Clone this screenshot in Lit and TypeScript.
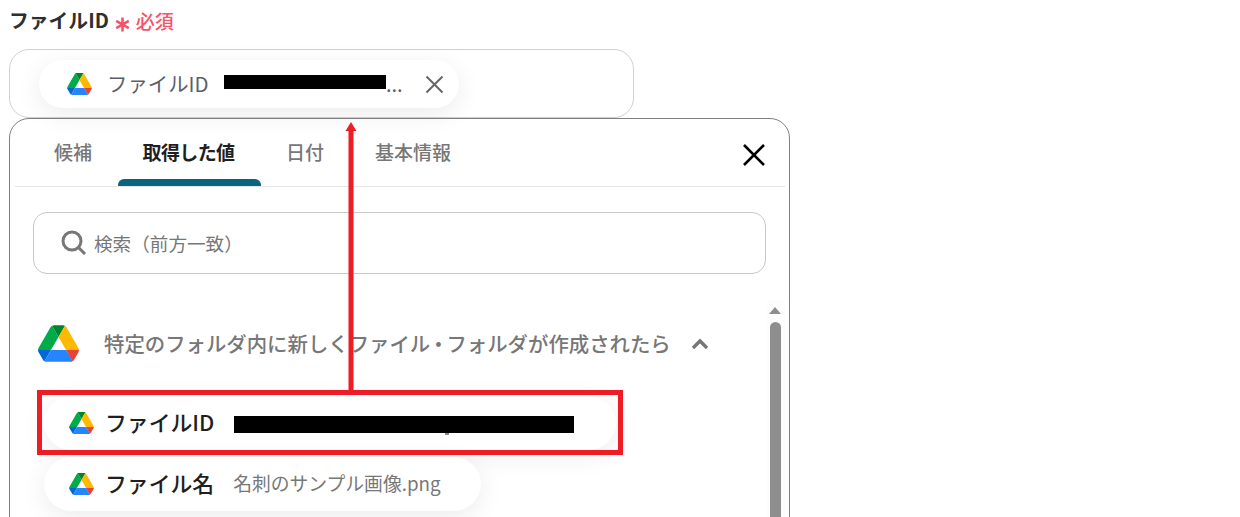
import { LitElement, html, css, svg } from "lit";
import { customElement } from "lit/decorators.js";

const drive = (size: number) => html`<svg class="drive" width=${size} height=${Math.round((size * 78) / 87.3)} viewBox="0 0 87.3 78">
  ${svg`<path d="m6.6 66.85 3.85 6.65c.8 1.4 1.95 2.5 3.3 3.3l13.75-23.8h-27.5c0 1.55.4 3.1 1.2 4.5z" fill="#0066da"/>
  <path d="m43.65 25-13.75-23.8c-1.35.8-2.5 1.9-3.3 3.3l-25.4 44a9.06 9.06 0 0 0 -1.2 4.5h27.5z" fill="#00ac47"/>
  <path d="m73.55 76.8c1.35-.8 2.5-1.9 3.3-3.3l1.6-2.75 7.65-13.25c.8-1.4 1.2-2.95 1.2-4.5h-27.502l5.852 11.5z" fill="#ea4335"/>
  <path d="m43.65 25 13.75-23.8c-1.35-.8-2.9-1.2-4.5-1.2h-18.5c-1.6 0-3.15.45-4.5 1.2z" fill="#00832d"/>
  <path d="m59.8 53h-32.3l-13.75 23.8c1.35.8 2.9 1.2 4.5 1.2h50.8c1.6 0 3.15-.45 4.5-1.2z" fill="#2684fc"/>
  <path d="m73.4 26.5-12.7-22c-.8-1.4-1.95-2.5-3.3-3.3l-13.75 23.8 16.15 28h27.45c0-1.55-.4-3.1-1.2-4.5z" fill="#ffba00"/>`}
</svg>`;

@customElement("app-root")
export class AppRoot extends LitElement {
  static styles = css`
    :host {
      display: block;
      position: relative;
      width: 1240px;
      height: 517px;
      overflow: hidden;
      background: #fff;
      font-family: "Noto Sans CJK JP", "Noto Sans", sans-serif;
      color: #222;
    }
    .label {
      display: flex;
      align-items: center;
      height: 39px;
      padding: 0 0 0 9px;
      font-size: 19.8px;
      font-weight: 700;
      color: #2e2e2e;
      line-height: 39px;
    }
    .star { margin-left: 6px; width: 15px; height: 15px; margin-top: 9px; }
    .req { margin-left: 6px; font-size: 19px; font-weight: 500; color: #f9526b; margin-top: 2px; }
    .field {
      box-sizing: border-box;
      margin: 10px 0 0 9px;
      width: 625px;
      height: 69px;
      border: 1px solid #cfd0d6;
      border-radius: 20px;
      padding: 10px 0 0 29px;
    }
    .chip {
      display: flex;
      align-items: center;
      box-sizing: border-box;
      background: #fff;
      border-radius: 27px;
      box-shadow: 0 6px 26px rgba(0, 0, 0, 0.08);
    }
    .chip.top {
      width: 420px;
      height: 48px;
      padding-left: 28px;
    }
    .chip.top .name { margin-left: 15px; padding-bottom: 3px; font-size: 20.4px; color: #5b5f69; width: 117px; white-space: nowrap; }
    .bar.top { width: 162px; height: 14px; background: #000; margin-bottom: 4px; }
    .dots { font-size: 20px; color: #5b5f69; line-height: 14px; width: 17px; white-space: nowrap; }
    .chip.top .x { margin-left: 22px; }
    .panel {
      box-sizing: border-box;
      margin-left: 9px;
      width: 781px;
      height: 460px;
      border: 1px solid #808080;
      border-radius: 20px;
      padding: 0 4px 0 5px;
    }
    .tabs {
      display: flex;
      align-items: stretch;
      height: 67px;
      padding-left: 15px;
      border-bottom: 1px solid #e6e6e6;
    }
    .tab {
      position: relative;
      box-sizing: border-box;
      padding-top: 18px;
      font-size: 19px;
      line-height: 30px;
      font-weight: 500;
      color: #777;
      white-space: nowrap;
    }
    .tab.first { padding-left: 24px; padding-right: 26px; }
    .tab.active { padding-left: 24.5px; padding-right: 26.5px; color: #1f1f1f; font-weight: 700; letter-spacing: -0.6px; }
    .tab.date { padding-left: 25px; padding-right: 25px; }
    .tab.last { margin-left: 2px; padding-left: 24px; padding-right: 24px; }
    .tab.active::after {
      content: "";
      position: absolute;
      left: 0;
      right: 0;
      bottom: 0;
      height: 7px;
      background: #07657f;
      border-radius: 6px 6px 0 0;
    }
    .close { margin-left: auto; margin-right: 19px; margin-top: 24px; width: 24px; height: 24px; }
    .search {
      display: flex;
      align-items: center;
      box-sizing: border-box;
      margin: 25px 0 0 18px;
      width: 733px;
      height: 62px;
      border: 1px solid #c8c8c8;
      border-radius: 14px;
      padding-left: 27px;
      font-size: 18.6px;
      color: #777;
    }
    .search span { margin-left: 7px; padding-bottom: 2px; }
    .body { display: flex; height: 300px; margin-top: 26px; }
    .list { flex: 1; min-width: 0; }
    .group {
      display: flex;
      align-items: center;
      height: 38px;
      margin: 24px 0 0 23px;
      font-size: 20.4px;
      font-weight: 500;
      color: #777;
      white-space: nowrap;
    }
    .group .title { margin-left: 25px; }
    .group .dot { font-feature-settings: "palt"; padding: 0 3px; }
    .group .chev { margin-left: 20px; margin-top: 2px; }
    .rows { display: flex; flex-direction: column; gap: 7px; margin: 34px 0 0 29px; align-items: flex-start; }
    .chip.row { height: 54px; padding-left: 25px; }
    .chip.row .name { margin-left: 11px; padding-bottom: 4px; font-size: 21.85px; font-weight: 500; color: #1f1f1f; white-space: nowrap; }
    .chip.row .val { margin-left: 19px; padding-bottom: 4px; font-size: 18.8px; color: #777; white-space: nowrap; }
    .chip.row .bar { position: relative; margin: 2px 0 0 19.7px; width: 340px; height: 17px; background: #000; }
    .bar::after { content: ""; position: absolute; left: 211px; top: 17px; width: 4px; height: 2px; background: #888; }
    .bar.top::after { display: none; }
    .row.one { width: 572px; }
    .row.two { width: 437px; }
    .scroll { box-sizing: border-box; width: 18px; background: #fdfdfd; padding: 7px 0 0 2px; }
    .up { width: 0; height: 0; border: 6.5px solid transparent; border-top: 0; border-bottom: 7px solid #8e8e8e; }
    .thumb { width: 11px; height: 300px; margin: 8px 0 0 1px; background: #8e8e8e; border-radius: 6px 6px 0 0; }
    .redbox {
      position: absolute;
      left: 37px;
      top: 390px;
      box-sizing: border-box;
      width: 586px;
      height: 65px;
      border: 5px solid #ee1c25;
    }
    .arrow { position: absolute; left: 344px; top: 122px; }
  `;

  render() {
    return html`
      <div class="label">
        ファイルID
        <svg class="star" viewBox="0 0 15 15">
          <path d="M7.5 0.5v14M1.2 3.9l12.6 7.2M13.8 3.9L1.2 11.1" stroke="#f9526b" stroke-width="2.6" fill="none" />
        </svg>
        <span class="req">必須</span>
      </div>
      <div class="field">
        <div class="chip top">
          ${drive(25)}
          <span class="name">ファイルID</span>
          <span class="bar top"></span>
          <span class="dots">...</span>
          <svg class="x" width="19" height="19" viewBox="0 0 19 19">
            <path d="M1.5 1.5l16 16M17.5 1.5l-16 16" stroke="#666" stroke-width="2" fill="none" />
          </svg>
        </div>
      </div>
      <div class="panel">
        <div class="tabs">
          <div class="tab first">候補</div>
          <div class="tab active">取得した値</div>
          <div class="tab date">日付</div>
          <div class="tab last">基本情報</div>
          <svg class="close" viewBox="0 0 24 24">
            <path d="M2 2l20 20M22 2L2 22" stroke="#000" stroke-width="2.6" fill="none" />
          </svg>
        </div>
        <div class="search">
          <svg width="26" height="26" viewBox="0 0 26 26">
            <circle cx="11" cy="11" r="9" stroke="#777" stroke-width="3" fill="none" />
            <path d="M17.5 17.5l6.5 6.5" stroke="#777" stroke-width="3" fill="none" />
          </svg>
          <span>検索（前方一致）</span>
        </div>
        <div class="body">
          <div class="list">
            <div class="group">
              ${drive(41)}
              <span class="title">特定のフォルダ内に新しくファイル<span class="dot">・</span>フォルダが作成されたら</span>
              <svg class="chev" width="18" height="12" viewBox="0 0 18 12">
                <path d="M2 10l7-7 7 7" stroke="#777" stroke-width="3.4" fill="none" />
              </svg>
            </div>
            <div class="rows">
              <div class="chip row one">
                ${drive(25)}
                <span class="name">ファイルID</span>
                <span class="bar"></span>
              </div>
              <div class="chip row two">
                ${drive(25)}
                <span class="name">ファイル名</span>
                <span class="val">名刺のサンプル画像.png</span>
              </div>
            </div>
          </div>
          <div class="scroll">
            <div class="up"></div>
            <div class="thumb"></div>
          </div>
        </div>
      </div>
      <div class="redbox"></div>
      <svg class="arrow" width="14" height="268" viewBox="0 0 14 268">
        <path d="M7 0L12.5 9H1.5Z" fill="#ee1c25" />
        <rect x="4.5" y="8" width="5" height="260" fill="#ee1c25" />
      </svg>
    `;
  }
}
